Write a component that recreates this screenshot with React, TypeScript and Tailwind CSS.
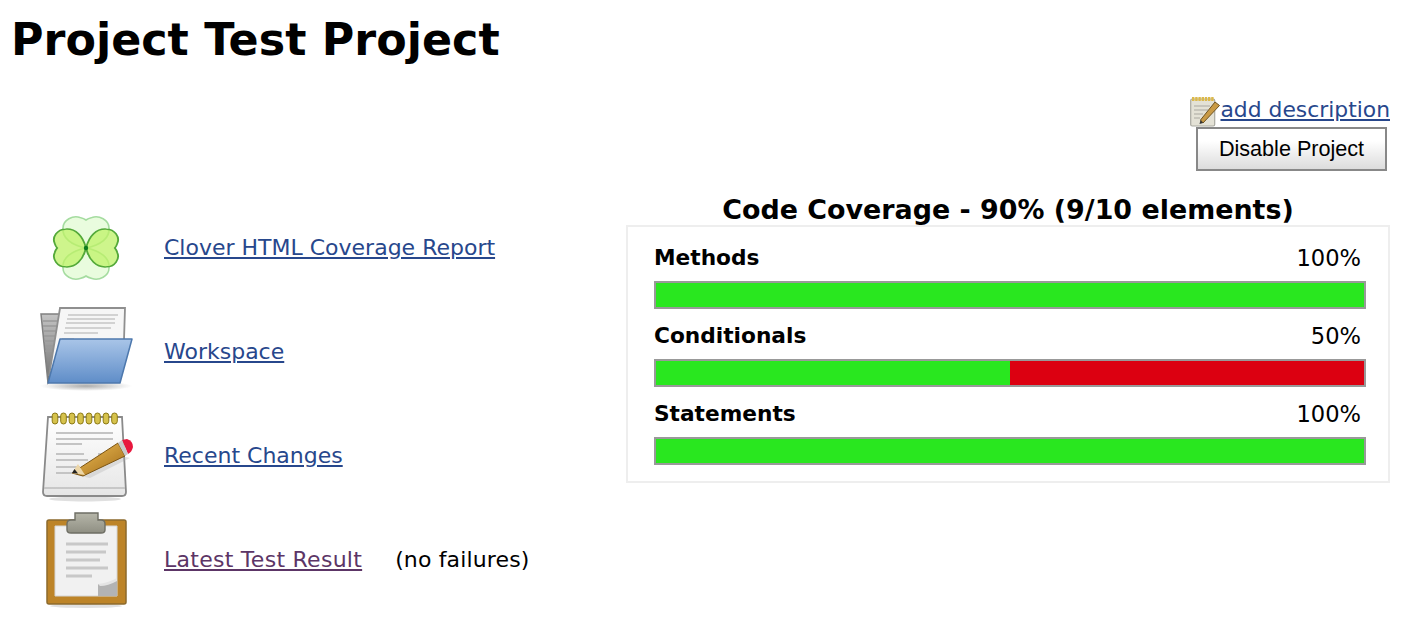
import React from 'react';

function CloverIcon() {
  const leaf = 'M0 0C-15 -3 -24 -10 -23 -20C-23 -28 -13 -33 -6 -30.5Q-2 -29.5 0 -28Q2 -29.5 6 -30.5C13 -33 23 -28 23 -20C24 -10 15 -3 0 0Z';
  return (
    <svg width="96" height="96" viewBox="-48 -48 96 96" className="blur-[0.4px]">
      <g stroke="#a5dca0" strokeWidth="1.6" fill="#e3fbd6" fillOpacity="0.8">
        <path d={leaf} />
        <path d={leaf} transform="rotate(180)" />
      </g>
      <g stroke="#54a93a" strokeWidth="1.8" fill="#bdf266" fillOpacity="0.75">
        <path d={leaf} transform="rotate(90) scale(0.82 1.03)" />
        <path d={leaf} transform="rotate(270) scale(0.82 1.03)" />
      </g>
      <circle r="2.2" fill="#0b7a1d" />
    </svg>
  );
}

function FolderIcon() {
  return (
    <svg width="96" height="96" viewBox="0 0 96 96" className="blur-[0.4px]">
      <defs>
        <linearGradient id="folderBlue" x1="0" y1="0" x2="0" y2="1">
          <stop offset="0" stopColor="#a9c5e8" />
          <stop offset="1" stopColor="#5f8dc8" />
        </linearGradient>
        <linearGradient id="folderBack" x1="0" y1="0" x2="0" y2="1">
          <stop offset="0" stopColor="#c4c4c4" />
          <stop offset="1" stopColor="#6f6f6f" />
        </linearGradient>
        <radialGradient id="folderShadow">
          <stop offset="0" stopColor="#888" stopOpacity="0.7" />
          <stop offset="1" stopColor="#888" stopOpacity="0" />
        </radialGradient>
      </defs>
      <ellipse cx="48" cy="82" rx="46" ry="5" fill="url(#folderShadow)" />
      <path d="M3 10H26L26 60L10 79Z" fill="url(#folderBack)" stroke="#808080" strokeWidth="1.5" />
      <path d="M5 17H24M5 22H24M6 27H24M6 32H24M6 37H24M7 42H24M7 47H22" stroke="#999" strokeWidth="1.5" />
      <path d="M22 4H87L86 36H34L11 72Z" fill="#f6f6f6" stroke="#8f8f8f" strokeWidth="1.8" />
      <path d="M30 11H80M29 15H77M28 19H77M27 24H73M26 29H60M24 35H36" stroke="#c6c6c6" strokeWidth="1.6" />
      <path d="M22 35H94L82 79H10Z" fill="url(#folderBlue)" stroke="#4d78ad" strokeWidth="1.5" strokeLinejoin="round" />
    </svg>
  );
}

function NotepadIcon() {
  const rings = [17, 25.5, 34, 42.5, 51, 59.5, 68, 76.5];
  return (
    <svg width="96" height="96" viewBox="0 0 96 96" className="blur-[0.4px]">
      <defs>
        <linearGradient id="padBody" x1="0" y1="0" x2="0" y2="1">
          <stop offset="0" stopColor="#ffffff" />
          <stop offset="1" stopColor="#e6e6e6" />
        </linearGradient>
        <linearGradient id="pencilBody" x1="0" y1="0" x2="1" y2="1">
          <stop offset="0" stopColor="#f4c459" />
          <stop offset="1" stopColor="#a06a18" />
        </linearGradient>
      </defs>
      <ellipse cx="47" cy="91" rx="36" ry="2.5" fill="#e0e0e0" />
      <path d="M10 9H84L88 84Q88 88 84 88H9Q5 88 5 84Z" fill="url(#padBody)" stroke="#8a8a8a" strokeWidth="1.8" />
      <path d="M6 80H87" stroke="#bdbdbd" strokeWidth="1.4" />
      {rings.map((x) => (
        <rect key={x} x={x - 2.8} y="5" width="5.6" height="11" rx="2.8" fill="#d6c24c" stroke="#8c7a16" strokeWidth="1" />
      ))}
      <path d="M18 25H75M18 31H75M18 36H44M18 46H46M18 52H50M18 59H42M18 65H34" stroke="#c4c4c4" strokeWidth="2" />
      <path d="M60 46H75M60 52H75" stroke="#c4c4c4" strokeWidth="2" />
      <path d="M38 67L80 47L92 50L52 70Z" fill="#aaa" fillOpacity="0.3" />
      <path d="M34 65L80 35L87 48L45 68Z" fill="url(#pencilBody)" stroke="#7b5412" strokeWidth="1" strokeLinejoin="round" />
      <path d="M34 65L40 56L47 67Z" fill="#ecd6a8" />
      <path d="M34 65L36.5 61L40 65.5Z" fill="#222" />
      <path d="M84 32L89 31Q95 33 95 39Q94 44 90 46Z" fill="#e8173d" />
      <path d="M80 35L84 32L90 46L87 48Z" fill="#c9c9c9" />
    </svg>
  );
}

function ClipboardIcon() {
  return (
    <svg width="96" height="96" viewBox="0 0 96 96" className="blur-[0.4px]">
      <defs>
        <linearGradient id="clipMetal" x1="0" y1="0" x2="0" y2="1">
          <stop offset="0" stopColor="#b6b6a9" />
          <stop offset="1" stopColor="#8f8f83" />
        </linearGradient>
      </defs>
      <ellipse cx="48" cy="94" rx="36" ry="2" fill="#e0e0e0" />
      <rect x="9" y="8" width="79" height="84" rx="2" fill="#bd8428" stroke="#8c6a2c" strokeWidth="1.5" />
      <path d="M17 14H79V84H17Z" fill="#f1f1f1" stroke="#d5d5d5" strokeWidth="1" />
      <path d="M37 1H60V8H63Q67 8 67 12V18Q67 21 63 21H33Q29 21 29 18V12Q29 8 33 8H37Z" fill="url(#clipMetal)" stroke="#6e6e64" strokeWidth="1.4" />
      <path d="M28 32H70M28 40H68M28 48H62M28 56H70M28 64H54" stroke="#c8c8c8" strokeWidth="3" />
      <path d="M60 84V72Q70 73 79 67V84Z" fill="#b3b3b3" />
      <path d="M60 72Q70 71 79 66L79 69Q70 74 62 74Z" fill="#e4e4e4" />
    </svg>
  );
}

function NoteSmallIcon() {
  return (
    <svg width="30" height="31" viewBox="0 0 30 31" className="blur-[0.3px]">
      <rect x="0.7" y="3" width="24" height="27" rx="1.5" fill="#e4e2d6" stroke="#a9a9a0" strokeWidth="1.2" />
      <path d="M2 3H24" stroke="#dcb94b" strokeWidth="4" strokeDasharray="2.4 0.8" />
      <path d="M4 10H20M4 14H18M4 18H13M4 22H10" stroke="#bdbcb2" strokeWidth="1.4" />
      <path d="M10.5 24L25 6L29.5 9.5L13 27Z" fill="#c99a45" stroke="#6e5322" strokeWidth="1" strokeLinejoin="round" />
      <path d="M10.5 24L9.5 28L13 27Z" fill="#333" />
    </svg>
  );
}

function ReportLink({ icon, label, visited, extra, labelClass }: { icon: React.ReactNode; label: string; visited?: boolean; extra?: string; labelClass?: string }) {
  return (
    <div className="flex items-center h-[104px]">
      <div className="w-[96px] h-[96px] mr-[30px] shrink-0">{icon}</div>
      <a href="#" className={`underline ${visited ? 'text-[#5c3566]' : 'text-[#27478c]'} ${labelClass ?? ''}`}>
        {label}
      </a>
      {extra && <span className="ml-[33px] text-black tracking-[0.15px]">{extra}</span>}
    </div>
  );
}

function CoverageRow({ label, pct }: { label: string; pct: number }) {
  return (
    <div className="h-[78px]">
      <div className="flex justify-between items-center h-[26px] pr-[5px]">
        <span className="font-bold text-[21.7px]">{label}</span>
        <span className="text-[22.6px]">{pct}%</span>
      </div>
      <div className="flex h-[28px] border-2 border-[#999] bg-[#dc0011] mt-[10px]">
        <div className="bg-[#29e71f] h-full" style={{ width: `${pct}%` }} />
      </div>
    </div>
  );
}

export default function App() {
  return (
    <div className="font-['DejaVu_Sans',sans-serif] w-[1406px] h-[632px] overflow-hidden bg-white text-black text-[22px] leading-[26px]">
      <h1 className="h-[78px] pl-[11px] pt-[14px] text-[44.4px] leading-[52px] font-bold">Project Test Project</h1>

      <div className="flex flex-col items-end pr-[16px]">
        <div className="flex items-end h-[49px]">
          <NoteSmallIcon />
          <a href="#" className="underline text-[#27478c] mb-[4px] text-[21.85px]">add description</a>
        </div>
        <button className="w-[191px] h-[44px] mr-[3px] border-2 border-[#888] bg-gradient-to-b from-white from-30% to-[#dcdcdc] font-['Liberation_Sans',sans-serif] text-[21.6px] text-black">
          Disable Project
        </button>
      </div>

      <div className="flex">
        <div className="w-[626px] pl-[38px] pt-[25px] shrink-0">
          <ReportLink icon={<CloverIcon />} label="Clover HTML Coverage Report" />
          <ReportLink icon={<FolderIcon />} label="Workspace" />
          <ReportLink icon={<NotepadIcon />} label="Recent Changes" />
          <ReportLink icon={<ClipboardIcon />} label="Latest Test Result" visited extra="(no failures)" labelClass="tracking-[0.27px]" />
        </div>

        <div className="w-[764px] pt-[22px]">
          <div className="text-center font-bold text-[26.9px] leading-[34px]">Code Coverage - 90% (9/10 elements)</div>
          <div className="h-[258px] -mt-[2px] border-2 border-[#eee] pl-[26px] pr-[22px] pt-[18px]">
            <CoverageRow label="Methods" pct={100} />
            <CoverageRow label="Conditionals" pct={50} />
            <CoverageRow label="Statements" pct={100} />
          </div>
        </div>
      </div>
    </div>
  );
}
